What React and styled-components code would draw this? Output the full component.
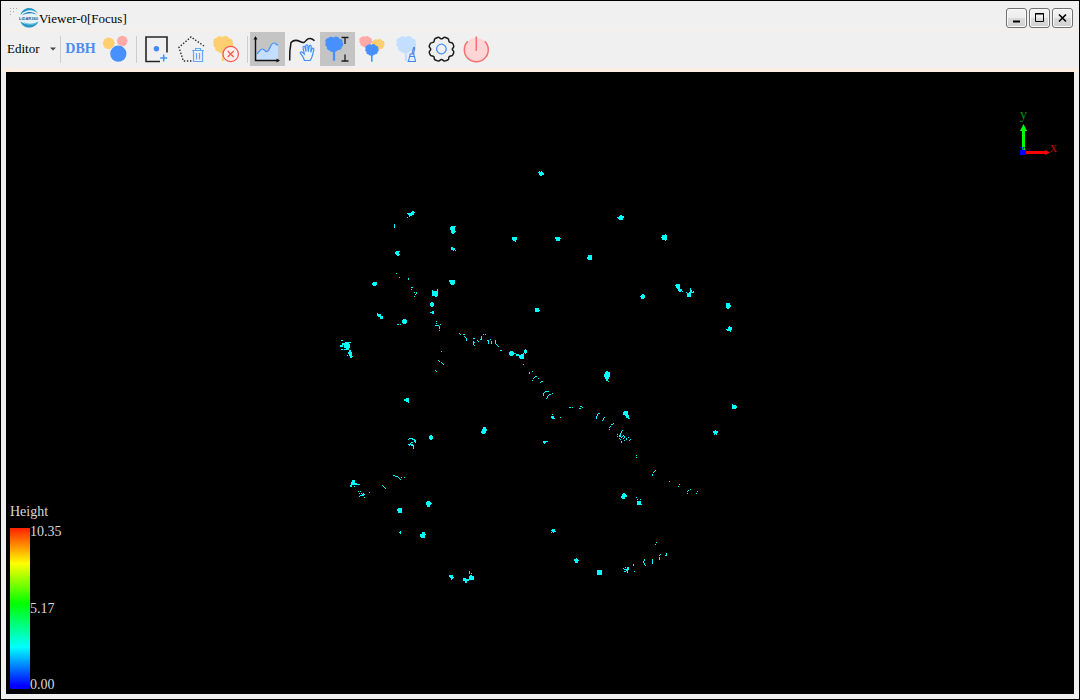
import React, { useState } from 'react';
import styled, { createGlobalStyle } from 'styled-components';

const GlobalStyle = createGlobalStyle`
  * {
    box-sizing: border-box;
  }

  body {
    margin: 0;
    background: #f0f0f0;
    font-family: 'Liberation Serif', 'Noto Sans CJK SC', serif;
  }
`;

const Window = styled.div`
  display: flex;
  flex-direction: column;
  min-height: 100vh;
  border: 1px solid #000;
  background: #f0f0f0;
`;

const TitleBar = styled.header`
  display: flex;
  align-items: center;
  height: 30px;
  padding: 4px 6px 0 8px;
  border-bottom: 1px solid #faefe2;
`;

const Title = styled.h1`
  flex: 1;
  margin: 0;
  padding-top: 2px;
  font-size: 13px;
  line-height: 16px;
  font-weight: normal;
  color: #000;
`;

const WindowButtons = styled.div`
  display: flex;
  gap: 2px;
`;

const WindowButton = styled.button`
  display: flex;
  align-items: center;
  justify-content: center;
  width: 21px;
  height: 20px;
  padding: 0;
  border: 1px solid #707070;
  border-radius: 3px;
  background: linear-gradient(#f4f4f4 0%, #ececec 48%, #dcdcdc 52%, #d0d0d0 100%);
  box-shadow: inset 0 0 0 1px #fafafa;
`;

const ToolBar = styled.nav`
  display: flex;
  align-items: center;
  height: 41px;
  padding-left: 5px;
  padding-bottom: 4px;
  border-bottom: 4px solid #faefe2;
  padding-top: 3px;
`;

const MenuButton = styled.button`
  display: flex;
  align-items: center;
  justify-content: space-between;
  width: 51px;
  height: 34px;
  padding: 0 1px;
  border: none;
  background: none;
  font-family: inherit;
  font-size: 13px;
  color: #000;
`;

const Separator = styled.div`
  width: 6px;
  height: 27px;
  background: linear-gradient(#cdcdcd, #cdcdcd) center / 1px 100% no-repeat;
`;

const ToolButton = styled.button`
  display: flex;
  align-items: center;
  justify-content: center;
  width: 35px;
  height: 34px;
  padding: 0;
  border: none;
  background: ${props => (props.$active ? '#c4c4c4' : 'transparent')};
  font-family: inherit;
  font-size: 14px;
  font-weight: bold;
  color: #4a8cf5;
`;

const Viewport = styled.main`
  position: relative;
  flex: 1;
  margin: 0 5px 5px;
  background: #000;
  overflow: hidden;
`;

const PointCloud = styled.svg`
  position: absolute;
  inset: 0;
  width: 100%;
  height: 100%;
  fill: #00ffff;
`;

const Axes = styled.svg`
  position: absolute;
  top: 32px;
  right: 12px;
  font-size: 14px;
`;

const Legend = styled.section`
  position: absolute;
  left: 4px;
  bottom: 5px;
  color: #d8d8d8;
  font-size: 14px;
  line-height: 16px;
`;

const LegendTitle = styled.h2`
  margin: 0 0 8px;
  font-size: 14px;
  font-weight: normal;
`;

const LegendScale = styled.div`
  display: flex;
  height: 161px;
`;

const LegendBar = styled.div`
  width: 20px;
  background: linear-gradient(
    #ff2000 0%,
    #ffff00 22%,
    #00ff00 47%,
    #00ffff 74%,
    #0000ff 98%
  );
`;

const LegendLabels = styled.div`
  display: flex;
  flex-direction: column;
  justify-content: space-between;
  margin: -4px 0;
`;

// runs of lit pixels: x, y, width, height
const POINTS = [
  [412, 211, 2, 1], [411, 212, 4, 1], [407, 213, 7, 1], [408, 214, 6, 1], [409, 215, 3, 1], [409, 216], [407, 217],
  [394, 224, 1, 4], [451, 226, 4, 1], [450, 227, 5, 3], [451, 230, 4, 3], [452, 233, 2, 1], [455, 226], [455, 231],
  [451, 247, 2, 1], [451, 248, 4, 2], [453, 250, 1, 1], [455, 250],
  [395, 252, 4, 2], [396, 251, 4, 1], [396, 254, 4, 1], [397, 255, 2, 1],
  [396, 273], [399, 277], [408, 278, 1, 2], [372, 283, 5, 2], [373, 282, 4, 1], [373, 285, 3, 1],
  [411, 287, 2, 1], [411, 289], [414, 292], [416, 292, 1, 2], [415, 294], [414, 296],
  [432, 290], [432, 291, 6, 3], [432, 294, 6, 2], [435, 296, 2, 1], [437, 289, 1, 2],
  [449, 280, 6, 2], [450, 282, 5, 2], [451, 284, 3, 1],
  [431, 302, 2, 1], [430, 303, 4, 3], [431, 306, 2, 1], [432, 311, 2, 1], [430, 312, 4, 1], [432, 313, 2, 1],
  [377, 313], [377, 314, 4, 2], [378, 316, 5, 1], [380, 317, 3, 2],
  [403, 319, 3, 1], [402, 320, 5, 3], [403, 323, 3, 1], [397, 324, 2, 1], [400, 324],
  [341, 340, 2, 1], [345, 342, 4, 2], [342, 343, 3, 2], [349, 342, 2, 1], [340, 345, 3, 2], [344, 344, 6, 4],
  [341, 349, 2, 1], [344, 349, 2, 1], [346, 348, 3, 2], [349, 350, 2, 2], [348, 352, 4, 2], [349, 354, 3, 2],
  [347, 355], [350, 356, 2, 2], [352, 356],
  [436, 321], [436, 323], [435, 325, 2, 1], [437, 325], [438, 325, 1, 1], [440, 324], [439, 326, 1, 3], [439, 330],
  [441, 351], [438, 360], [439, 361], [441, 362], [442, 363], [443, 364], [435, 370], [436, 371],
  [404, 399, 5, 2], [406, 398, 3, 4], [408, 402],
  [459, 333], [460, 334], [463, 334, 2, 1], [464, 336], [465, 337], [466, 338, 1, 3],
  [473, 338, 2, 1], [473, 341, 1, 4], [474, 342], [474, 345], [477, 340], [478, 341], [481, 336, 1, 3],
  [480, 339, 2, 1], [483, 334], [485, 334], [487, 340, 2, 1], [488, 341, 1, 3], [490, 339], [491, 341, 1, 3],
  [495, 340, 1, 4], [496, 344], [497, 345], [498, 346], [500, 350, 2, 1],
  [509, 352, 5, 3], [510, 351, 3, 5], [514, 353, 2, 1], [516, 354, 3, 2], [519, 355, 4, 3], [521, 354, 3, 4],
  [520, 357, 4, 2], [523, 353, 1, 1], [524, 350, 3, 3], [525, 349, 1, 5],
  [523, 364], [529, 372, 1, 2], [532, 371], [535, 376, 2, 1], [534, 377], [533, 378], [532, 380], [538, 378],
  [540, 382], [541, 381, 2, 1], [543, 393, 1, 3], [544, 392], [545, 391], [546, 391, 3, 1], [546, 398],
  [547, 396, 1, 2], [548, 395], [549, 394, 2, 1], [552, 393],
  [569, 407, 2, 1], [572, 407], [580, 406, 2, 1], [582, 407], [579, 408, 2, 1],
  [552, 414], [551, 416, 3, 2], [552, 418, 3, 1], [560, 417],
  [483, 427, 3, 2], [482, 429, 5, 2], [481, 431, 5, 2], [482, 433, 3, 1], [543, 441, 5, 1], [543, 442, 3, 1], [544, 443],
  [535, 308, 4, 4], [539, 310],
  [606, 371, 2, 1], [605, 372, 5, 2], [604, 374, 6, 3], [605, 377, 4, 2], [606, 379, 2, 2], [608, 381],
  [598, 413, 2, 1], [597, 414, 1, 2], [596, 416, 1, 3], [604, 417], [603, 418, 1, 2], [602, 420],
  [613, 423], [611, 424, 2, 1], [610, 426], [609, 427], [609, 429],
  [624, 411, 4, 1], [623, 412, 5, 3], [625, 415, 4, 1], [626, 416, 3, 2], [628, 418, 2, 1],
  [622, 430], [621, 431, 1, 2], [620, 433, 1, 3], [619, 435, 2, 2], [617, 434], [617, 436], [619, 438], [621, 437],
  [622, 436], [623, 435], [624, 436, 1, 2], [626, 438, 1, 2], [624, 440], [623, 438], [628, 437], [630, 439],
  [629, 440], [620, 439], [621, 441, 1, 2],
  [636, 455], [636, 457], [655, 470], [654, 471], [653, 472], [652, 474, 1, 2], [669, 481], [679, 484], [678, 486],
  [690, 489], [688, 490], [687, 491], [687, 493], [697, 491], [696, 493],
  [732, 404], [732, 405, 4, 4], [736, 406, 1, 2], [715, 430], [713, 431, 5, 2], [714, 433, 3, 1], [714, 434], [716, 434],
  [623, 493, 2, 1], [622, 494, 4, 3], [625, 495, 2, 2], [621, 496, 4, 2], [622, 498, 3, 1],
  [636, 497], [640, 499], [637, 499], [637, 501, 4, 4], [641, 504],
  [409, 438, 4, 1], [408, 439], [412, 439, 3, 1], [414, 440, 2, 2], [415, 442], [411, 442, 2, 1], [410, 443],
  [408, 444, 5, 1], [409, 445], [411, 445, 3, 1], [413, 446, 1, 3],
  [429, 436, 4, 3], [430, 435, 2, 5],
  [393, 475, 2, 1], [395, 476, 3, 1], [398, 477], [399, 478], [400, 479], [401, 477], [404, 477],
  [382, 485], [383, 486], [384, 487], [385, 488],
  [352, 480, 3, 3], [351, 482, 3, 2], [351, 484, 4, 1], [350, 485, 2, 2], [354, 483, 3, 2], [355, 484, 5, 1], [354, 486],
  [358, 491], [360, 491], [359, 493], [361, 493], [363, 493], [362, 494, 2, 2], [360, 495], [359, 496], [364, 494],
  [364, 497], [361, 495], [369, 492],
  [398, 508, 4, 5], [397, 509, 1, 2], [427, 501, 3, 6], [426, 502, 5, 3], [431, 503], [400, 531, 1, 3], [399, 532],
  [422, 532, 3, 2], [420, 534, 5, 3], [421, 537, 3, 1], [425, 534], [424, 537],
  [449, 575, 4, 2], [450, 577, 4, 1], [451, 578, 2, 1], [451, 579], [463, 578, 3, 3], [466, 579, 3, 2],
  [465, 581, 2, 2], [469, 576, 5, 4], [470, 575, 2, 1], [469, 571, 1, 3], [471, 573],
  [552, 529, 3, 1], [551, 530, 4, 1], [552, 531, 4, 1], [551, 532], [553, 532],
  [576, 558], [574, 559, 4, 2], [575, 561, 3, 2], [578, 560], [597, 570, 5, 5],
  [625, 567], [627, 567, 2, 2], [623, 568], [624, 569, 5, 1], [626, 570, 2, 1], [624, 571, 2, 1], [627, 571, 1, 2],
  [633, 564, 1, 2], [634, 571], [644, 559, 1, 2], [643, 561, 1, 2], [644, 563, 1, 2], [645, 565], [652, 559, 1, 5],
  [660, 554], [659, 555], [659, 557, 1, 3], [665, 555, 2, 1], [666, 553, 1, 3], [656, 542], [655, 544],
  [538, 172], [539, 171], [541, 171], [539, 172, 4, 3], [543, 173, 1, 2], [540, 175, 2, 1],
  [620, 215, 2, 1], [619, 216, 5, 2], [617, 217, 2, 1], [618, 218, 5, 1], [619, 219, 4, 1],
  [512, 237, 5, 3], [513, 240, 3, 1], [515, 241], [555, 237, 5, 2], [556, 239, 4, 2], [560, 238],
  [662, 235, 5, 5], [661, 237], [665, 234], [665, 240], [588, 255, 4, 5], [587, 257, 1, 2],
  [641, 295, 4, 3], [640, 296], [642, 294, 2, 1], [641, 298, 3, 1],
  [676, 284, 4, 4], [675, 285], [677, 288, 3, 1], [678, 289, 4, 2], [679, 291, 2, 1], [682, 291],
  [690, 288, 1, 2], [690, 290, 2, 3], [689, 292, 4, 1], [687, 293, 4, 4], [693, 291, 1, 2], [686, 292],
  [726, 303, 4, 5], [730, 305, 1, 2], [727, 308, 2, 1], [728, 327, 4, 3], [726, 329, 3, 1], [729, 326], [727, 330, 4, 1], [730, 331],
];

const Icon = ({ children, width = 35, height = 34 }) => (
  <svg width={width} height={height} viewBox={`0 0 ${width} ${height}`} fill="none" aria-hidden="true">
    {children}
  </svg>
);

// tree crown drawn in a 20 x 17 box
const Crown = ({ x, y, scale = 1, color, trunk = 25 }) => (
  <g transform={`translate(${x} ${y}) scale(${scale})`} fill={color}>
    <path d="M3.500 1.800C5.500-.3 8 .2 9.500 1.200c1.800-1.800 5.500-1.300 6.500 1.200 2.800 0 4.200 2 3.600 4.200 1.200 2 .4 4.300-1.100 5.200.2 2.600-2 3.700-4 3.200-1.200 1.400-2.700 2.200-4.600 2.200-2 .2-3.800-.3-4.700-1.700-2.400-.2-3.500-1.900-3-3.900C.2 10.400-.1 8.500.9 7-.3 4.600 1 2.200 3.500 1.800Z" />
    <path d={`M8.800 14h2.400V${trunk}H8.800Z`} />
  </g>
);

const Logo = () => (
  <Icon width={21} height={24}>
    <circle cx="11" cy="12" r="9" fill="#e6f3f8" />
    <path d="M2.500 9C5 0 16 0 20 8c-4-5-12-5-17.500 1Z" fill="#2997c5" />
    <path d="M4 9.500C8 4.500 15 5 19 9c-4-2.500-10-2.500-15 .5Z" fill="#156fa8" />
    <path d="M2.500 15.500c2.500 8 14.500 8 18 0-4 4-13 4-18 0Z" fill="#2997c5" />
    <path d="M5 15.500c4 3 10 3 15 0-3 5-11 5-15 0Z" fill="#52b4d6" />
    <text x="1" y="14" fontSize="4" fontWeight="bold" fontFamily="Liberation Sans" fill="#0d5f94">LiDAR360</text>
  </Icon>
);

const Grip = () => (
  <Icon width={9} height={20}>
    <path d="M1 0h1M4 0h1M7 0h1M1 3h1M4 3h1M1 6h1" stroke="#a8a8a8" transform="translate(0 .5)" />
  </Icon>
);

const BubblesIcon = () => (
  <Icon>
    <circle cx="10.700" cy="11.300" r="5.800" fill="#ffce70" />
    <circle cx="24.300" cy="9" r="5.300" fill="#ffaaa8" />
    <circle cx="20.300" cy="21.700" r="8.600" fill="#f0f0f0" />
    <circle cx="20.300" cy="21.700" r="8.100" fill="#4790ff" />
  </Icon>
);

const AddSquareIcon = () => (
  <Icon>
    <path d="M28 20.500V5H7v24.500h14" stroke="#262626" strokeWidth="1.600" />
    <circle cx="17.400" cy="16.700" r="2.700" fill="#3f8aff" />
    <path d="M24.700 22.500v7M21.200 26h7" stroke="#4790ff" strokeWidth="1.500" />
  </Icon>
);

const DeletePolygonIcon = () => (
  <Icon>
    <path d="M30 14 17 5 5 15.300l4.300 13.700H18" stroke="#262626" strokeWidth="1.400" strokeDasharray="1.400 1.700" />
    <path d="M18 18.500h12M21.500 18v-1.500h5V18M19.500 19v10.500h9V19M22.500 21v6.500M25.500 21v6.500" stroke="#6ba4fa" strokeWidth="1.200" />
  </Icon>
);

const RemoveTreeIcon = () => (
  <Icon>
    <Crown x={4} y={4} color="#ffce70" />
    <circle cx="21.700" cy="22" r="7.700" fill="#fff0ee" stroke="#f75550" strokeWidth="1.200" />
    <path d="m18.700 19 6 6m0-6-6 6" stroke="#f75550" strokeWidth="1.200" />
  </Icon>
);

const ChartIcon = () => (
  <Icon>
    <path d="M7 22c2-2 3-5 5.500-5 2 0 2 3 4.500 2.500 3.500-1 3-8.500 7-8.500 2 0 2 2 4 2v15H7Z" fill="#c3deff" />
    <path d="M7 22c2-2 3-5 5.500-5 2 0 2 3 4.500 2.500 3.500-1 3-8.500 7-8.500 2 0 2 2 4 2" stroke="#4790ff" strokeWidth="1.200" />
    <path d="M5.500 6v22.500h23" stroke="#111" strokeWidth="1.400" />
    <path d="m5.500 4-2 3.500h4ZM30 28.500l-3.500-2v4Z" fill="#111" />
  </Icon>
);

const CurveHandIcon = () => (
  <Icon>
    <path d="M4.700 28.500c-.2-7 .3-13 1.300-18 3-3 6-2.500 9-1 4 2 4.500 1 6.500-1.500 2-2.500 5.500-2 8 .8" stroke="#161616" strokeWidth="1.500" />
    <path
      d="M19.500 28.500c-1-3.500-2.500-5.500-4-7-.8-1.300.8-2 1.800-1.200l2 1.600-1.300-6.200c-.2-1.500 1.700-1.800 2-.4l1 4.400-.2-5.800c0-1.500 2-1.500 2 0l.5 5.800.9-5.300c.3-1.400 2.100-1.200 2 .2l-.5 5.600 1.300-3.300c.6-1.300 2.200-.7 1.800.7-.8 3.200-1.200 7.600-3.600 10.900Z"
      stroke="#4790ff"
      strokeWidth="1.200"
    />
  </Icon>
);

const TreeHeightIcon = () => (
  <Icon>
    <Crown x={5} y={4.5} scale={0.9} color="#4790ff" trunk={27} />
    <path d="M21.500 5.500h7M25 5.500V12M21.500 29h7M25 22.500V29" stroke="#1c1c1c" strokeWidth="1.300" />
  </Icon>
);

const TreesIcon = () => (
  <Icon>
    <Crown x={4} y={4} scale={0.65} color="#ffaaa8" trunk={17} />
    <Crown x={16.5} y={7} scale={0.65} color="#ffce70" trunk={17} />
    <Crown x={10} y={12} scale={0.68} color="#4790ff" trunk={26} />
  </Icon>
);

const BrushTreeIcon = () => (
  <Icon>
    <Crown x={6} y={4} color="#c3deff" />
    <path d="M18.500 29.500h7l-1-5h-5ZM20 24.500v-2.500h4v2.500M22 22l1.500-6c.3-1 1.500-.8 1.300.2L23.500 22M17.500 29.500h8.500" stroke="#4785e8" strokeWidth="1.100" fill="#e1eeff" />
  </Icon>
);

const GearIcon = () => (
  <Icon>
    <path
      d="M12.500 5.500c2-.8 2.500 1.300 4 1.300s2-2.100 4-1.300l2.300 1c1.600.8.6 2.600 1.500 3.500s2.900.2 3.600 1.800l.8 2c.7 1.900-1.400 2-1.400 3.400s2.100 1.700 1.400 3.500l-.9 2.200c-.8 1.600-2.500.6-3.500 1.600s.2 2.800-1.500 3.500l-2.300.9c-1.800.7-2.400-1.400-4-1.400s-2.200 2.100-4 1.400l-2.200-.9c-1.700-.7-.6-2.500-1.600-3.500s-2.700 0-3.500-1.600l-.9-2.200c-.7-1.800 1.400-2 1.400-3.500s-2.100-1.500-1.400-3.400l.9-2c.7-1.600 2.500-.8 3.500-1.800s-.1-2.700 1.600-3.500Z"
      stroke="#1c1c1c"
      strokeWidth="1.500"
    />
    <circle cx="16.400" cy="17" r="4.800" stroke="#4790ff" strokeWidth="1.300" />
  </Icon>
);

const PowerIcon = () => (
  <Icon>
    <circle cx="16.300" cy="17.700" r="12" fill="#ffd5d5" />
    <path d="M7.800 9.200a12 12 0 1 0 17 0M16.300 4.500v14.500" stroke="#f77070" strokeWidth="1.500" />
  </Icon>
);

const tools = [
  [
    { name: 'Trunk diameter', label: 'DBH' },
    { name: 'Cluster', icon: BubblesIcon },
  ],
  [
    { name: 'Add area', icon: AddSquareIcon },
    { name: 'Delete polygon', icon: DeletePolygonIcon },
    { name: 'Remove tree', icon: RemoveTreeIcon },
  ],
  [
    { name: 'Profile', icon: ChartIcon },
    { name: 'Drag curve', icon: CurveHandIcon },
    { name: 'Tree height', icon: TreeHeightIcon },
    { name: 'Tree groups', icon: TreesIcon },
    { name: 'Clean tree', icon: BrushTreeIcon },
    { name: 'Settings', icon: GearIcon },
    { name: 'Exit', icon: PowerIcon },
  ],
];

function App() {
  const [active, setActive] = useState(['Profile', 'Tree height']);

  const toggleTool = (name) => {
    setActive(active.includes(name) ? active.filter(item => item !== name) : [...active, name]);
  };

  return (
    <Window>
      <GlobalStyle />
      <TitleBar>
        <Grip />
        <Logo />
        <Title>Viewer-0[Focus]</Title>
        <WindowButtons>
          <WindowButton aria-label="Minimize">
            <Icon width={13} height={12}><path d="M3 9.500h7" stroke="#000" strokeWidth="2" /></Icon>
          </WindowButton>
          <WindowButton aria-label="Maximize">
            <Icon width={13} height={12}>
              <path d="M2.500 1.500h8v8h-8ZM2 2h9" stroke="#000" />
            </Icon>
          </WindowButton>
          <WindowButton aria-label="Close">
            <Icon width={13} height={12}><path d="m3 2.500 7 7m0-7-7 7" stroke="#000" strokeWidth="1.600" /></Icon>
          </WindowButton>
        </WindowButtons>
      </TitleBar>

      <ToolBar>
        <MenuButton>
          Editor
          <Icon width={6} height={4}><path d="M0 .5h6l-3 3Z" fill="#444" /></Icon>
        </MenuButton>
        {tools.map((group, index) => (
          <React.Fragment key={index}>
            <Separator />
            {group.map(({ name, label, icon: ToolIcon }) => (
              <ToolButton
                key={name}
                title={name}
                $active={active.includes(name)}
                onClick={() => toggleTool(name)}
              >
                {label || <ToolIcon />}
              </ToolButton>
            ))}
          </React.Fragment>
        ))}
      </ToolBar>

      <Viewport>
        <PointCloud viewBox="6 72 1068 622" shapeRendering="crispEdges">
          {POINTS.map(([x, y, w = 1, h = 1], index) => (
            <rect key={index} x={x} y={y} width={w} height={h} />
          ))}
        </PointCloud>

        <Axes width="44" height="56" viewBox="0 0 44 56">
          <path d="M5.500 48V24" stroke="#00ff00" strokeWidth="3" />
          <path d="m5.500 20-3.500 7h7Z" fill="#00ff00" />
          <path d="M8 48.500h20" stroke="#ff0000" strokeWidth="3" />
          <path d="m32 48.500-5-2.500v5Z" fill="#ff0000" />
          <rect x="2" y="46" width="6" height="5" fill="#0000ff" />
          <text x="2" y="15" fill="#0b8f0b">y</text>
          <text x="2" y="49" fill="#0000ff" fontSize="12">z</text>
          <text x="32" y="48" fill="#c00808">x</text>
        </Axes>

        <Legend>
          <LegendTitle>Height</LegendTitle>
          <LegendScale>
            <LegendBar />
            <LegendLabels>
              <span>10.35</span>
              <span>5.17</span>
              <span>0.00</span>
            </LegendLabels>
          </LegendScale>
        </Legend>
      </Viewport>
    </Window>
  );
}

export default App;
